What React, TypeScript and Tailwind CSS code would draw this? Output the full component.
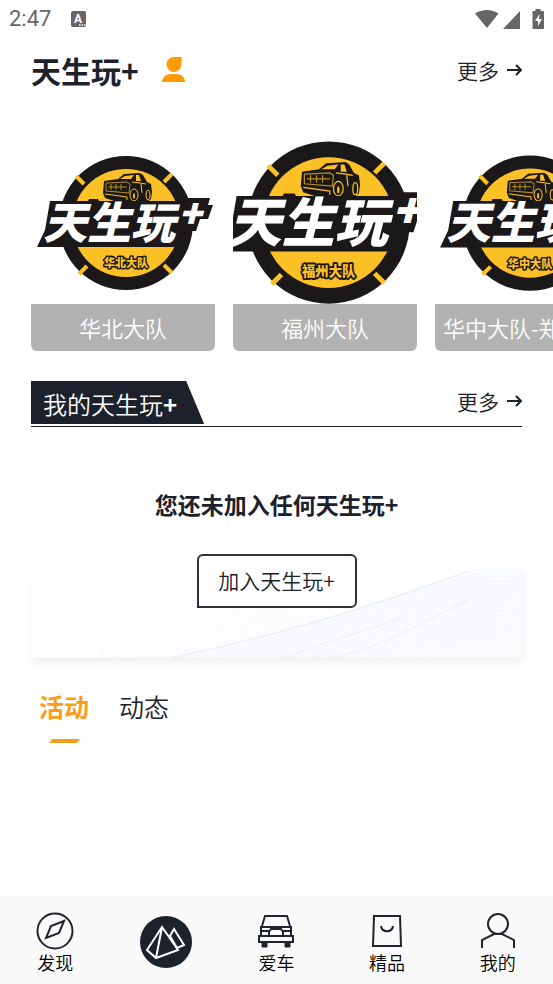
import { useState } from 'react'
import type { ReactNode } from 'react'
import clsx from 'clsx'

const teams = [
  { name: '华北大队', badge: '华北大队', viewBox: '0 0 184 192' },
  { name: '福州大队', badge: '福州大队', viewBox: '16 20 152 158' },
  { name: '华中大队-郑州分队', badge: '华中大队', viewBox: '1 1 182 190' },
]

const arcs = Array.from({ length: 15 }, (_, i) => i * 6)
const waves = Array.from({ length: 18 }, (_, i) => i * 4)

function TeamLogo({ badge, viewBox }: { badge: string; viewBox: string }) {
  return (
    <svg viewBox={viewBox} className="block h-48 w-full" fontFamily="'Noto Sans CJK SC', sans-serif" fontWeight="900">
      <circle cx="95" cy="111" r="67" fill="#1b1819" />
      <circle cx="95" cy="111" r="54" fill="#fdc128" />
      <path d="M45 64l8 8M141 62l-8 8M48 162l8-8M141 161l-8-8" stroke="#fdc128" strokeWidth="4" />

      {/* truck */}
      <path d="M73 69l14-2 6-5 16-1 3 2 4 7 4 2 1 8-1 7-4 3H86l-12-4-2-5z" fill="#1b1819" />
      <path d="M89 67l5-3 9-1-3 4zM105 63l3 0 2 6-5 0z" fill="#fdc128" />
      <path d="M75 71l21-1 3 2-1 9-23-2zM77 75h19M80 72v6M85 72v6M90 72v6" fill="none" stroke="#b98d22" strokeWidth="1" />
      <path d="M74 82l22 3v3M101 70l8 1 6 1M110 72l1 9" fill="none" stroke="#fdc128" strokeWidth="1" />
      <ellipse cx="103" cy="83" rx="4" ry="6" fill="#1b1819" stroke="#fdc128" strokeWidth="1" />
      <ellipse cx="103" cy="84" rx="1" ry="3" fill="#fdc128" />
      <ellipse cx="117" cy="83" rx="2" ry="5" fill="#1b1819" stroke="#fdc128" strokeWidth="1" />

      {/* banner behind the name */}
      <path d="M19 89h38l1-2h9l1 2h88v-3h23l-2 7h5l-5 14h-8l-4 12h-11l-6 16H6l8-17z" fill="#1b1819" />
      <text x="12" y="127" fontSize="44" fontStyle="italic" fill="#fff">天生玩</text>
      <text x="148" y="115" fontSize="36" fontStyle="italic" fill="#fff" stroke="#fff" strokeWidth="1">+</text>
      <text
        x="95"
        y="155"
        fontSize="11"
        textAnchor="middle"
        fill="#fdc128"
        stroke="#1b1819"
        strokeWidth="3"
        paintOrder="stroke"
        strokeLinejoin="round"
      >
        {badge}
      </text>
    </svg>
  )
}

function MoreLink() {
  return (
    <a href="#more" className="flex items-center gap-[7px] text-[21px] leading-10 text-[#1c212b]">
      更多
      <svg viewBox="0 0 16 12" className="h-3 w-4" fill="none" stroke="currentColor" strokeWidth="2">
        <path d="M1 6h14M10 1l5 5-5 5" />
      </svg>
    </a>
  )
}

function NavItem({ label, children }: { label: string; children: ReactNode }) {
  return (
    <a href={'#' + label} className="flex flex-col items-center pt-4 text-[18px] leading-6 text-black">
      <svg viewBox="0 0 38 38" className="h-[38px] w-[38px]" fill="none" stroke="#20242e" strokeWidth="2">
        {children}
      </svg>
      {label}
    </a>
  )
}

function StatusBar() {
  return (
    <div className="flex h-[38px] items-center pr-2 pl-[9px] text-[#666]">
      <span className="font-[Roboto] text-[22px] leading-6 font-normal">2:47</span>
      <svg viewBox="0 0 15 16" className="ml-5 h-4 w-[15px]">
        <rect width="15" height="16" rx="2" fill="#666" />
        <text x="7" y="12" fontSize="12" fontWeight="700" fontFamily="Roboto, sans-serif" textAnchor="middle" fill="#fff">A</text>
        <path d="M8 14h1.500M10.500 14h1.500M13 14h1.500" stroke="#fff" strokeWidth="1.500" />
      </svg>
      <svg viewBox="0 0 70 20" className="ml-auto h-5 w-[70px]" fill="#666">
        <path d="M0 4.500C7-.3 16.500-.3 23.500 4.500L12 19z" />
        <path d="M45 2v18H28z" />
        <path d="M60.500 0h5v2H68a1 1 0 0 1 1 1v16a1 1 0 0 1-1 1H58.500a1 1 0 0 1-1-1V3a1 1 0 0 1 1-1h2z" />
        <path d="M64.500 5l-4.500 7h3v5l4-7h-3z" fill="#fff" />
      </svg>
    </div>
  )
}

export default function App() {
  const [tab, setTab] = useState('活动')

  return (
    <div className="flex min-h-screen flex-col overflow-hidden bg-white font-['Noto_Sans_CJK_SC',sans-serif] font-[350] text-[#1c212b]">
      <StatusBar />

      <main className="flex-1">
        <header className="flex h-16 items-center px-[31px]">
          <h1 className="text-[30px] leading-10 font-bold">天生玩+</h1>
          <svg viewBox="0 0 24 26" className="ml-[23px] h-[26px] w-6" fill="#ff9b05">
            <path d="M12 0h7.500v7.500a7.500 7.500 0 1 1-7.500-7.500z" />
            <path d="M0 25c0-4.500 4-8 9-8h5c5 0 9 3.500 9 8z" />
          </svg>
          <div className="ml-auto">
            <MoreLink />
          </div>
        </header>

        <div className="mt-[10px] flex gap-[18px] overflow-hidden pl-[31px]">
          {teams.map(team => (
            <a key={team.name} href="#team" className="block w-[184px] shrink-0 overflow-hidden rounded-md">
              <TeamLogo badge={team.badge} viewBox={team.viewBox} />
              <span className="block h-[47px] overflow-hidden bg-[#b2b2b2] px-2 text-center text-[22px] leading-[46px] whitespace-nowrap text-white">
                {team.name}
              </span>
            </a>
          ))}
        </div>

        <section className="mx-[31px] mt-[30px]">
          <div className="flex items-start justify-between border-b border-[#1c212b] pb-0.5">
            <h2 className="h-[43px] bg-[#1c212b] pr-[27px] pl-3 text-[24px] leading-[45px] text-white [clip-path:polygon(0_0,calc(100%-18px)_0,100%_100%,0_100%)]">
              我的天生玩<b>+</b>
            </h2>
            <MoreLink />
          </div>

          <div className="grid">
            <svg
              viewBox="0 0 492 90"
              preserveAspectRatio="none"
              className="col-start-1 row-start-1 h-[90px] w-full self-end shadow-[2px_4px_8px_#00000012]"
              fill="none"
            >
              <rect width="492" height="90" fill="#fff" />
              <path d="M60 90L149 10C210 0 280 50 360 90z" fill="#fdfdff" />
              {arcs.map(n => (
                <path key={n} d={`M${70 + n} 90C${105 + n} ${10 + n} ${150 + n} ${-6 + n} ${215 + n} ${24 + n}S330 76 370 90`} stroke="#f8f9fc" />
              ))}
              <path d="M139 90C249 68 360 32 436 4Q462-2 492 0V90z" fill="#fafbfe" />
              {waves.map(n => (
                <path key={n} d={`M${139 + n * 3} 90C${249 + n * 2} ${68 + n / 2} 360 ${32 + n} 436 ${4 + n}Q462 ${-2 + n} 492 ${n * 1.2}`} stroke="#f4f6fb" />
              ))}
              <path d="M139 90C249 68 360 32 436 4" stroke="#eef1f8" strokeWidth="2" />
              <path d="M256 90C300 70 340 62 370 50M299 90C350 82 400 50 439 32" stroke="#f0f3f9" strokeWidth="2" />
            </svg>
            <div className="col-start-1 row-start-1 flex flex-col items-center pt-[61px] pb-[50px]">
              <p className="text-[23px] leading-8 font-bold">您还未加入任何天生玩+</p>
              <button className="mt-[34px] h-[54px] w-40 rounded-md rounded-bl-none border-2 border-[#2d313b] bg-white pb-0.5 text-[21px] leading-8">
                加入天生玩+
              </button>
            </div>
          </div>
        </section>

        <div role="tablist" className="mt-[30px] flex gap-[30px] px-[39px]">
          {['活动', '动态'].map(name => (
            <button
              key={name}
              role="tab"
              aria-selected={tab === name}
              onClick={() => setTab(name)}
              className={clsx('flex flex-col items-center text-[25px] leading-9', tab === name && 'font-bold text-[#f99d1c]')}
            >
              {name}
              {tab === name && (
                <svg viewBox="0 0 31 4" className="mt-[15px] h-1 w-[31px]" fill="#f99d1c">
                  <path d="M3 0h28l-3 4H0z" />
                </svg>
              )}
            </button>
          ))}
        </div>
      </main>

      <nav className="grid h-[88px] grid-cols-5 bg-[#fafafa]">
        <NavItem label="发现">
          <circle cx="19" cy="19" r="17.500" />
          <path d="M28 9L15 14 10 26l13-5z" />
        </NavItem>
        <a href="#play" aria-label="天生玩+" className="flex items-center justify-center">
          <svg viewBox="0 0 52 52" className="mt-1 h-[52px] w-[52px]" fill="none" stroke="#fff" strokeWidth="2">
            <circle cx="26" cy="26" r="26" fill="#1c212b" stroke="none" />
            <path d="M22 11L7 34l9 8 22-8zM22 11l-6 31M30 20l4-7 10 16-7 3z" />
          </svg>
        </a>
        <NavItem label="爱车">
          <path d="M5 14L8 4h22l3 10M4 15h30v9H4zM2 24h34v6H2zM12 24v-4l2-3h10l2 3v4" />
          <path d="M5 19h7M26 19h7" />
          <path d="M5 30h5v5H5zM28 30h5v5h-5z" fill="#20242e" strokeWidth="1" />
        </NavItem>
        <NavItem label="精品">
          <path d="M6 4h26l1 30H5zM13 14c1 7 11 7 12 0" />
        </NavItem>
        <NavItem label="我的">
          <circle cx="19" cy="12" r="10" />
          <path d="M3 36v-8l12-6h8l12 6v8" />
        </NavItem>
      </nav>
    </div>
  )
}
